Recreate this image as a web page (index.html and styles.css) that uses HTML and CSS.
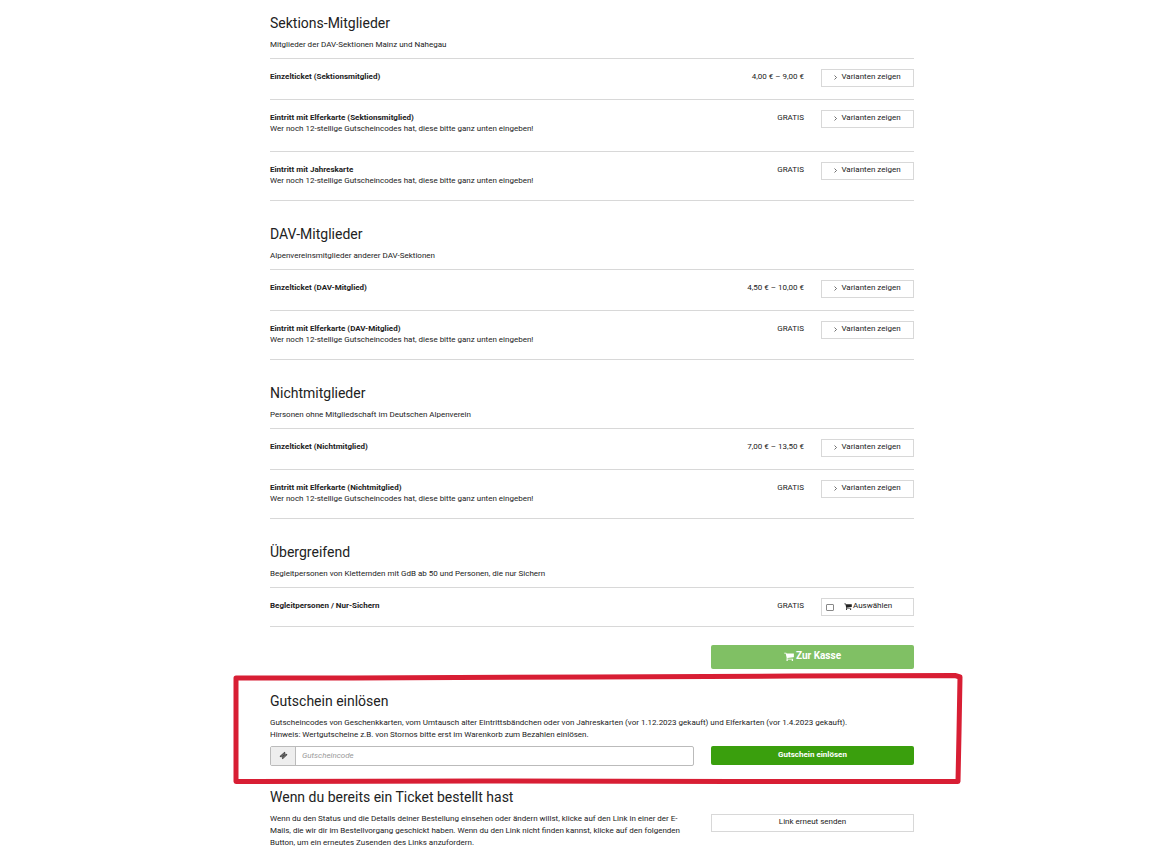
FILE: index.html
```html
<!DOCTYPE html>
<html lang="de">
<head>
<meta charset="utf-8">
<meta name="viewport" content="width=device-width, initial-scale=1">
<title>Tickets</title>
<link rel="stylesheet" href="styles.css">
</head>
<body>

<svg class="sprite" aria-hidden="true">
  <symbol id="cart" viewBox="0 0 1664 1536">
    <path d="M640 1408q0 52-38 90t-90 38-90-38-38-90 38-90 90-38 90 38 38 90zm896 0q0 52-38 90t-90 38-90-38-38-90 38-90 90-38 90 38 38 90zm128-1088v512q0 24-16.500 42.500t-40.500 21.500l-1044 122q13 60 13 70 0 16-24 64h920q26 0 45 19t19 45-19 45-45 19H448q-26 0-45-19t-19-45q0-11 8-31.500t16-36 21.500-40 15.500-29.500L268 256H64q-26 0-45-19T0 192t19-45 45-19h256q16 0 28.500 6.500T368 150t13 24.500 8 26 5.500 29.500 4.500 26h1201q26 0 45 19t19 45z"/>
  </symbol>
  <symbol id="angle" viewBox="0 0 6 10">
    <path d="M1 1l4 4-4 4" fill="none" stroke="currentColor" stroke-width="1.300"/>
  </symbol>
  <symbol id="ticket" viewBox="0 0 16 16">
    <path d="M10 1.500l1.200 1.200a1.600 1.600 0 0 0 2.200 2.200L15 6.500 6.500 14.500l-1.400-1.400a1.600 1.600 0 0 0-2.200-2.200L1 9.500z"/>
    <path d="M9.200 4.600l2.600 2.600L7 11.600 4.300 9z" fill="none" stroke="#eee" stroke-width=".6"/>
  </symbol>
</svg>

<main class="container">
<form action="#" method="post">

  <section class="category">
    <h3>Sektions-Mitglieder</h3>
    <p>Mitglieder der DAV-Sektionen Mainz und Nahegau</p>
    <div class="items">
      <div class="item">
        <div class="item-name"><strong>Einzelticket (Sektionsmitglied)</strong></div>
        <div class="price">4,00 € – 9,00 €</div>
        <button type="button" class="btn"><svg class="angle"><use href="#angle"/></svg>Varianten zeigen</button>
      </div>
      <div class="item">
        <div class="item-name"><strong>Eintritt mit Elferkarte (Sektionsmitglied)</strong>
          <p>Wer noch 12-stellige Gutscheincodes hat, diese bitte ganz unten eingeben!</p></div>
        <div class="price">GRATIS</div>
        <button type="button" class="btn"><svg class="angle"><use href="#angle"/></svg>Varianten zeigen</button>
      </div>
      <div class="item">
        <div class="item-name"><strong>Eintritt mit Jahreskarte</strong>
          <p>Wer noch 12-stellige Gutscheincodes hat, diese bitte ganz unten eingeben!</p></div>
        <div class="price">GRATIS</div>
        <button type="button" class="btn"><svg class="angle"><use href="#angle"/></svg>Varianten zeigen</button>
      </div>
    </div>
  </section>

  <section class="category">
    <h3>DAV-Mitglieder</h3>
    <p>Alpenvereinsmitglieder anderer DAV-Sektionen</p>
    <div class="items">
      <div class="item">
        <div class="item-name"><strong>Einzelticket (DAV-Mitglied)</strong></div>
        <div class="price">4,50 € – 10,00 €</div>
        <button type="button" class="btn"><svg class="angle"><use href="#angle"/></svg>Varianten zeigen</button>
      </div>
      <div class="item">
        <div class="item-name"><strong>Eintritt mit Elferkarte (DAV-Mitglied)</strong>
          <p>Wer noch 12-stellige Gutscheincodes hat, diese bitte ganz unten eingeben!</p></div>
        <div class="price">GRATIS</div>
        <button type="button" class="btn"><svg class="angle"><use href="#angle"/></svg>Varianten zeigen</button>
      </div>
    </div>
  </section>

  <section class="category">
    <h3>Nichtmitglieder</h3>
    <p>Personen ohne Mitgliedschaft im Deutschen Alpenverein</p>
    <div class="items">
      <div class="item">
        <div class="item-name"><strong>Einzelticket (Nichtmitglied)</strong></div>
        <div class="price">7,00 € – 13,50 €</div>
        <button type="button" class="btn"><svg class="angle"><use href="#angle"/></svg>Varianten zeigen</button>
      </div>
      <div class="item">
        <div class="item-name"><strong>Eintritt mit Elferkarte (Nichtmitglied)</strong>
          <p>Wer noch 12-stellige Gutscheincodes hat, diese bitte ganz unten eingeben!</p></div>
        <div class="price">GRATIS</div>
        <button type="button" class="btn"><svg class="angle"><use href="#angle"/></svg>Varianten zeigen</button>
      </div>
    </div>
  </section>

  <section class="category">
    <h3>Übergreifend</h3>
    <p>Begleitpersonen von Kletternden mit GdB ab 50 und Personen, die nur Sichern</p>
    <div class="items">
      <div class="item">
        <div class="item-name"><strong>Begleitpersonen / Nur-Sichern</strong></div>
        <div class="price">GRATIS</div>
        <label class="btn select" for="companion"><input type="checkbox" id="companion" name="companion"><svg class="cart"><use href="#cart"/></svg>Auswählen</label>
      </div>
    </div>
  </section>

  <div class="columns checkout">
    <button type="submit" class="btn btn-green btn-lg" disabled><svg class="cart"><use href="#cart"/></svg>Zur Kasse</button>
  </div>
</form>

<section class="voucher">
  <h3>Gutschein einlösen</h3>
  <p>Gutscheincodes von Geschenkkarten, vom Umtausch alter Eintrittsbändchen oder von Jahreskarten (vor 1.12.2023 gekauft) und Elferkarten (vor 1.4.2023 gekauft).<br>
  Hinweis: Wertgutscheine z.B. von Stornos bitte erst im Warenkorb zum Bezahlen einlösen.</p>
  <form class="columns" action="#" method="post">
    <div class="input-group">
      <label for="voucher" aria-label="Gutscheincode"><svg class="ticket"><use href="#ticket"/></svg></label>
      <input type="text" id="voucher" name="voucher" placeholder="Gutscheincode">
    </div>
    <button type="submit" class="btn btn-green">Gutschein einlösen</button>
  </form>
  <!-- hand-drawn marker around the voucher box -->
  <svg class="marker" viewBox="0 0 730 112" preserveAspectRatio="none" aria-hidden="true">
    <path d="M3 5L120 5 360 4 560 3 722 2.500 727 4 726 60 725 108.500 500 108.500 250 108 3 108.500 3 60z"/>
  </svg>
</section>

<section class="resend">
  <h3>Wenn du bereits ein Ticket bestellt hast</h3>
  <div class="columns">
    <p>Wenn du den Status und die Details deiner Bestellung einsehen oder ändern willst, klicke auf den Link in einer der E-Mails, die wir dir im Bestellvorgang geschickt haben. Wenn du den Link nicht finden kannst, klicke auf den folgenden Button, um ein erneutes Zusenden des Links anzufordern.</p>
    <a class="btn" href="#">Link erneut senden</a>
  </div>
</section>
</main>

</body>
</html>
```
FILE: styles.css
```css
* {
  box-sizing: border-box;
}
body {
  margin: 0;
  padding: 13px 0 14px 35px;
  background: #fff;
  color: #222;
  font-family: Roboto, "Open Sans", sans-serif;
  font-size: 8px;
  line-height: 12px;
}
h3 {
  margin: 0 0 6px;
  font-size: 14px;
  font-weight: normal;
  line-height: 20px;
}
p {
  margin: 0;
}
svg {
  fill: currentColor;
}
.sprite {
  display: none;
}
.container {
  max-width: 644px;
  margin: 0 auto;
}

/* product list */
.category {
  margin-bottom: 23px;
}
.items {
  margin-top: 7px;
  border-bottom: 1px solid #d8d8d8;
}
.item {
  display: grid;
  grid-template-columns: 1fr auto 93px;
  column-gap: 17px;
  align-items: start;
  padding: 10px 0 12px;
  border-top: 1px solid #d8d8d8;
}
.item:last-child {
  padding-bottom: 10px;
}
.item-name,
.price {
  margin-top: 2px;
  margin-bottom: -1px;
  line-height: 11px;
}
.item-name p {
  margin-bottom: 6px;
}
.item:last-child .item-name p {
  margin-bottom: 5px;
}
.item strong {
  display: block;
}

/* buttons */
.btn {
  display: flex;
  align-items: center;
  justify-content: center;
  height: 18px;
  padding: 0 0 2px;
  border: 1px solid #d8d8d8;
  background: #fff;
  color: #222;
  font: inherit;
  text-decoration: none;
  cursor: pointer;
}
.btn-green {
  height: 19px;
  border: 0;
  border-radius: 2px;
  background: #3a9f0d;
  color: #fff;
  font-weight: bold;
}
.btn-lg {
  grid-column: 2;
  height: 24px;
  font-size: 10px;
}
.btn:disabled {
  background: #80c064;
  cursor: default;
}
.angle {
  width: 3px;
  height: 5px;
  margin-right: 4px;
}
.cart {
  width: 8px;
  height: 7px;
  margin-right: 1px;
}
.btn-lg .cart {
  width: 10px;
  height: 9px;
  margin-right: 2px;
}
.select {
  justify-content: flex-start;
  padding-left: 4px;
}
.select input {
  appearance: none;
  width: 8px;
  height: 7px;
  margin: 3px 10px 0 0;
  border: 1px solid #888;
  border-radius: 1px;
}
.select input:checked {
  background: #3a9f0d;
}

.columns {
  display: grid;
  grid-template-columns: 1fr 203px;
  column-gap: 17px;
  align-items: start;
}
.checkout {
  margin-top: -5px;
}

/* voucher */
.voucher {
  position: relative;
  margin-top: 22px;
}
.voucher .columns {
  margin-top: 5px;
}
.marker {
  position: absolute;
  top: -18px;
  left: -37px;
  width: calc(100% + 86px);
  height: 112px;
  pointer-events: none;
}
.marker path {
  fill: none;
  stroke: #d81e34;
  stroke-width: 5;
  stroke-linejoin: round;
}
.input-group {
  display: flex;
  height: 20px;
  border: 1px solid #bbb;
  border-radius: 2px;
}
.input-group label {
  display: flex;
  align-items: center;
  justify-content: center;
  width: 25px;
  padding-bottom: 1px;
  border-right: 1px solid #bbb;
  background: #eee;
  color: #444;
}
.input-group input {
  flex: 1;
  min-width: 0;
  padding: 0 6px;
  border: 0;
  background: none;
  font: inherit;
}
.input-group input::placeholder {
  color: #999;
  font-style: italic;
}
.ticket {
  width: 9px;
  height: 9px;
}

.resend {
  margin-top: 21px;
}
.resend .btn {
  margin-top: 1px;
}
```
